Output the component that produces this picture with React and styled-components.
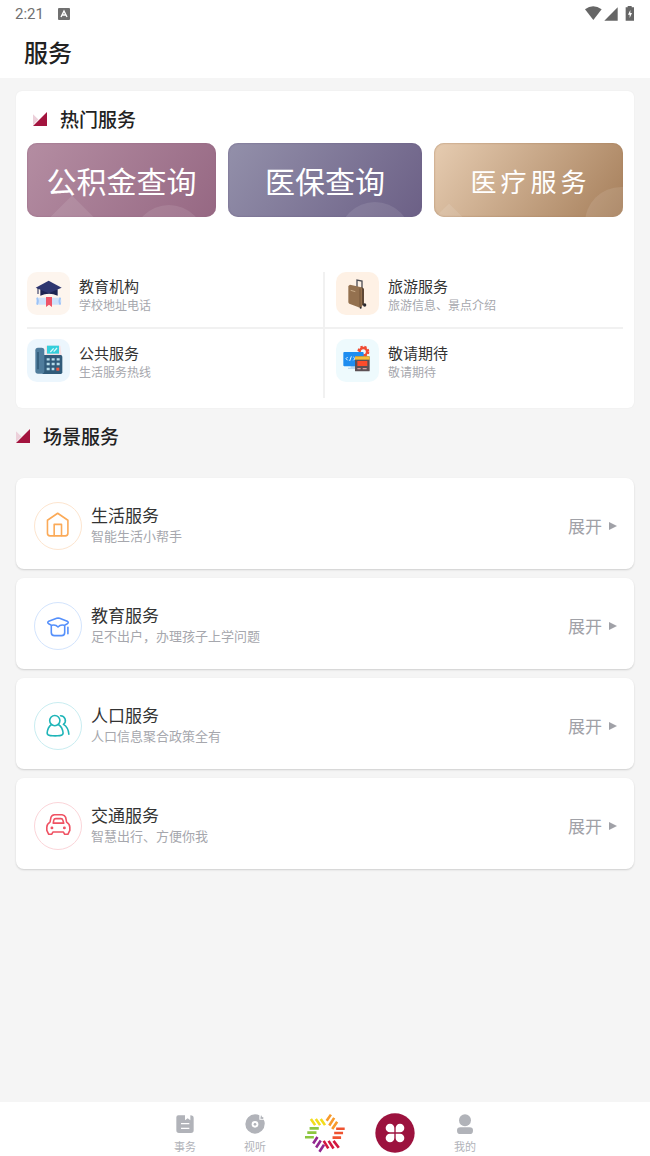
import React from 'react';
import styled, { createGlobalStyle } from 'styled-components';

const GlobalStyle = createGlobalStyle`
  * {
    box-sizing: border-box;
  }

  body {
    margin: 0;
    background: #f5f5f5;
    color: #2b2b2b;
    font-family: 'Noto Sans CJK SC', sans-serif;
  }

  h1, h2, h3, p {
    margin: 0;
  }

  button {
    border: 0;
    padding: 0;
    background: none;
    font-family: inherit;
    cursor: pointer;
  }

  svg {
    display: block;
    flex: none;
  }
`;

const Page = styled.div`
  display: flex;
  flex-direction: column;
  min-height: 100vh;
`;

const StatusBar = styled.div`
  display: flex;
  align-items: center;
  gap: 14px;
  height: 27px;
  padding: 0 15px;
  background: #fff;
  color: #707070;
  font-family: Roboto, sans-serif;
  font-size: 15px;
`;

const StatusIcons = styled.div`
  display: flex;
  align-items: center;
  margin-left: auto;
`;

const Header = styled.header`
  padding: 7px 24px 8px;
  background: #fff;
`;

const PageTitle = styled.h1`
  color: #222;
  font-weight: 500;
  font-size: 24px;
  line-height: 36px;
`;

const Main = styled.main`
  flex: 1;
  padding: 13px 16px 32px;
`;

const HotCard = styled.section`
  padding: 12px 11px 10px;
  border-radius: 6px;
  background: #fff;
  box-shadow: 0 0 2px rgba(0, 0, 0, 0.06);
`;

const SectionHead = styled.div`
  display: flex;
  align-items: center;
  gap: 13px;
  height: 32px;
  margin: ${({ $inCard }) => ($inCard ? '0 0 8px 6px' : '12px 0 26px')};
`;

const SectionTitle = styled.h2`
  color: #222;
  font-weight: 500;
  font-size: 19px;
  line-height: 32px;
`;

const Banners = styled.div`
  display: grid;
  grid-template-columns: 189fr 194fr 189fr;
  gap: 12px;
`;

const Banner = styled.button`
  position: relative;
  height: 74px;
  overflow: hidden;
  border-radius: 10px;
  background: ${({ $from, $to }) => `linear-gradient(125deg, ${$from}, ${$to})`};
  box-shadow: inset 0 0 2px ${({ $to }) => $to};
  color: #fff;
  font-size: ${({ $spaced }) => ($spaced ? 26 : 30)}px;
  letter-spacing: ${({ $spaced }) => ($spaced ? '4px' : 'normal')};
  padding-left: ${({ $spaced }) => ($spaced ? 4 : 0)}px;
`;

const Diamond = styled.i`
  position: absolute;
  top: ${({ $top }) => $top}px;
  left: ${({ $left }) => $left}%;
  width: 56px;
  height: 56px;
  background: rgba(255, 255, 255, 0.1);
  transform: rotate(45deg);
`;

const Bubble = styled.i`
  position: absolute;
  top: ${({ $top }) => $top}px;
  left: ${({ $left }) => $left}%;
  width: 72px;
  height: 72px;
  border-radius: 50%;
  background: rgba(255, 255, 255, 0.1);
`;

const BannerText = styled.span`
  position: relative;
`;

const HotGrid = styled.div`
  display: grid;
  grid-template-columns: 1fr 1fr;
  margin-top: 55px;
`;

const HotItem = styled.div`
  display: flex;
  gap: 9px;
  padding-bottom: ${({ $last }) => ($last ? 16 : 12)}px;
  padding-top: ${({ $last }) => ($last ? 10 : 0)}px;
  padding-left: ${({ $right }) => ($right ? 11 : 0)}px;
  border-right: ${({ $right }) => ($right ? 0 : 2)}px solid #f1f1f1;
  border-bottom: ${({ $last }) => ($last ? 0 : 2)}px solid #f1f1f1;
`;

const Tile = styled.svg`
  width: 43px;
  height: 43px;
  border-radius: 10px;
  background: ${({ $bg }) => $bg};
`;

const HotText = styled.div`
  padding-top: 4px;
`;

const HotName = styled.h3`
  color: #333;
  font-weight: 400;
  font-size: 15px;
  line-height: 20px;
`;

const HotDesc = styled.p`
  color: #a6a7ad;
  font-size: 12px;
  line-height: 18px;
`;

const SceneList = styled.div`
  display: grid;
  gap: 9px;
`;

const SceneCard = styled.section`
  display: flex;
  align-items: center;
  gap: 9px;
  padding: 24px 17px 19px 18px;
  border-radius: 8px;
  background: #fff;
  box-shadow: 0 1px 2px rgba(0, 0, 0, 0.16);
`;

const SceneIcon = styled.svg`
  width: 48px;
  height: 48px;
  border: 1px solid ${({ $ring }) => $ring};
  border-radius: 50%;
  color: ${({ $color }) => $color};
  fill: none;
  stroke: currentColor;
  stroke-width: 5;
  stroke-linejoin: round;
  stroke-linecap: round;
`;

const SceneText = styled.div`
  flex: 1;
  padding-bottom: 4px;
`;

const SceneName = styled.h3`
  color: #333;
  font-weight: 400;
  font-size: 17px;
  line-height: 24px;
`;

const SceneDesc = styled.p`
  color: #a6a7ad;
  font-size: 13px;
  line-height: 18px;
`;

const Expand = styled.button`
  display: flex;
  align-items: center;
  gap: 7px;
  color: #a0a1a7;
  font-size: 17px;
  line-height: 24px;
`;

const TabBar = styled.nav`
  position: sticky;
  bottom: 0;
  display: flex;
  justify-content: center;
  height: 54px;
  background: #fff;
`;

const TabItem = styled.button`
  display: flex;
  flex-direction: column;
  align-items: center;
  justify-content: center;
  gap: 4px;
  width: 70px;
  padding-top: ${({ $plain }) => ($plain ? 10 : 7)}px;
  color: #b1b3b9;
  font-size: 11px;
  line-height: 16px;
`;

const Marker = () => (
  <svg width="14" height="14" viewBox="0 0 13 13" aria-hidden="true">
    <path d="M0 2L5 7L0 12Z" fill="#ecd0da" />
    <path d="M13 0V13H0Z" fill="#a3143e" />
  </svg>
);

const hotServices = [
  {
    name: '教育机构',
    desc: '学校地址电话',
    bg: '#fdf5ee',
    icon: (
      <>
        <path d="M30 77H100Q106 87 100 98H30Q24 87 30 77Z" fill="#cfe2fb" />
        <path d="M30 77Q36 87 30 98M100 77Q94 87 100 98" stroke="#9dc3f6" strokeWidth="5" fill="none" />
        <path d="M57 75H75V105L66 98L57 105Z" fill="#ee5468" />
        <path d="M40 52H92V71Q66 60 40 71Z" fill="#1d2452" />
        <path d="M65 26L104 47L65 64L26 47Z" fill="#2e3670" />
        <path d="M33 48V66" stroke="#1d2452" strokeWidth="3" />
      </>
    ),
  },
  {
    name: '旅游服务',
    desc: '旅游信息、景点介绍',
    bg: '#fef1e5',
    icon: (
      <>
        <path d="M63 46V24L78 27V50" stroke="#4c4d54" strokeWidth="4" fill="none" />
        <path d="M68 106L84 98V50L76 44Z" fill="#5f4835" />
        <path d="M37 42L42 38L76 46L78 50V104L72 107L40 95Q37 94 37 90Z" fill="#94714f" />
        <path d="M44 55L58 59" stroke="#c9ab87" strokeWidth="3" />
        <path d="M72 49V104" stroke="#74573b" strokeWidth="3" />
        <circle cx="86" cy="99" r="5" fill="#2c2b30" />
        <circle cx="74" cy="107" r="3" fill="#2c2b30" />
      </>
    ),
  },
  {
    name: '公共服务',
    desc: '生活服务热线',
    bg: '#ecf6fd',
    icon: (
      <>
        <path d="M56 20H100L104 50H56Z" fill="#f7dfe2" />
        <rect x="60" y="20" width="36" height="24" fill="#35cfdb" />
        <path d="M70 39L80 28M80 38L90 27" stroke="#d5fafc" strokeWidth="4" />
        <rect x="44" y="48" width="62" height="57" rx="5" fill="#315b7a" />
        <rect x="25" y="26" width="27" height="78" rx="8" fill="#4f7c9c" />
        <path d="M33 39V91" stroke="#315b7a" strokeWidth="5" />
        <path d="M59 61H99M59 75H99M59 90H82" stroke="#b7dcea" strokeWidth="7" strokeDasharray="9 6" />
        <rect x="88" y="86" width="9" height="9" fill="#f15742" />
      </>
    ),
  },
  {
    name: '敬请期待',
    desc: '敬请期待',
    bg: '#eefafd',
    icon: (
      <>
        <circle cx="82" cy="38" r="15" stroke="#f04c34" strokeWidth="6" strokeDasharray="7 5" fill="none" />
        <circle cx="82" cy="38" r="11" stroke="#f04c34" strokeWidth="7" fill="none" />
        <path d="M44 78H60V90H36V86H44Z" fill="#bcd9ee" />
        <rect x="22" y="39" width="61" height="43" rx="3" fill="#1e8df0" />
        <path d="M35 54L30 59L35 64M52 54L57 59L52 64M46 52L41 66" stroke="#e8f5ff" strokeWidth="3" fill="none" />
        <rect x="57" y="52" width="44" height="45" rx="2" fill="#5c5054" />
        <rect x="57" y="52" width="44" height="10" fill="#f6bd36" />
        <rect x="64" y="66" width="30" height="15" fill="#fc4c2c" />
        <path d="M64 89H74M80 89H92" stroke="#d5a0a0" strokeWidth="4" />
      </>
    ),
  },
];

const sceneServices = [
  {
    name: '生活服务',
    desc: '智能生活小帮手',
    color: '#fbaa58',
    ring: '#fde5cf',
    icon: (
      <>
        <path d="M39 54L71 32L103 54V95Q103 103 95 103H47Q39 103 39 95Z" />
        <path d="M60 102V67H83V102" />
      </>
    ),
  },
  {
    name: '教育服务',
    desc: '足不出户，办理孩子上学问题',
    color: '#5590fb',
    ring: '#d3e4fd',
    icon: (
      <>
        <path d="M43 57L68 48Q72 47 77 48L101 57Q107 61 101 65L92 70Q80 66 72 75Q64 66 52 70L43 65Q37 61 43 57Z" />
        <path d="M51 71V92Q51 102 61 102H83Q93 102 93 92V71M103 76V96" />
      </>
    ),
  },
  {
    name: '人口服务',
    desc: '人口信息聚合政策全有',
    color: '#1fb5b8',
    ring: '#c9edf1',
    icon: (
      <>
        <circle cx="62" cy="55" r="16" />
        <path d="M51 68C43 73 39 84 38 94Q38 101 48 102Q63 104 78 102Q88 101 88 94C87 84 82 73 74 68" />
        <path d="M80 40A15 15 0 0 1 89 67C99 73 105 84 106 98" />
      </>
    ),
  },
  {
    name: '交通服务',
    desc: '智慧出行、方便你我',
    color: '#ef5263',
    ring: '#fbd5d9',
    icon: (
      <>
        <path d="M50 45Q52 38 61 37H85Q93 38 96 45L99 60Q109 66 109 76V86L103 98H93L89 91H56L52 98H43L37 86V76Q37 66 47 60Z" />
        <path d="M57 63L59 53Q60 49 65 49H81Q86 49 87 53L90 63Z" />
        <circle cx="53" cy="78" r="2" />
        <circle cx="92" cy="78" r="2" />
      </>
    ),
  },
];

const rays = [
  ['#f2dc1c', 'M453 70L466 89M468 70L481 89M483 70L496 89'],
  ['#f79a2c', 'M501 76L514 57M509 90L524 67M518 101L533 79'],
  ['#ef5330', 'M530 100H556M524 113H551M519 127H545'],
  ['#d3173f', 'M492 137L506 160M507 137L522 160M522 137L538 158'],
  ['#92278f', 'M460 145L473 125M469 157L483 136M479 170L493 149'],
  ['#8cc63f', 'M449 99H477M442 112H470M435 126H462'],
];

const Logo = () => (
  <svg width="42" height="42" viewBox="432 50 128 126" strokeWidth="8" fill="none">
    {rays.map(([color, d]) => (
      <path key={color} d={d} stroke={color} />
    ))}
  </svg>
);

const App = () => (
  <Page>
    <GlobalStyle />
    <StatusBar>
      <span>2:21</span>
      <svg width="12" height="12" viewBox="0 0 12 12">
        <rect width="12" height="12" rx="1" fill="#707070" />
        <path d="M3 9L6 3L9 9M4 7H8" stroke="#fff" strokeWidth="1.4" fill="none" />
      </svg>
      <StatusIcons>
        <svg width="50" height="16" viewBox="0 0 150 48" fill="#666">
          <path d="M0 10Q24 -8 50 10L25 42Z" />
          <path d="M98 4V44H58Z" />
          <path d="M128 4V0H140V4H147V44H122V4ZM136 12L129 26H134V36L141 21H136Z" fillRule="evenodd" />
        </svg>
      </StatusIcons>
    </StatusBar>

    <Header>
      <PageTitle>服务</PageTitle>
    </Header>

    <Main>
      <HotCard>
        <SectionHead $inCard>
          <Marker />
          <SectionTitle>热门服务</SectionTitle>
        </SectionHead>

        <Banners>
          <Banner $from="#b48da2" $to="#966883">
            <Diamond $top={64} $left={9} />
            <Bubble $top={62} $left={56} />
            <BannerText>公积金查询</BannerText>
          </Banner>
          <Banner $from="#9390aa" $to="#6c6086">
            <Bubble $top={59} $left={57} />
            <BannerText>医保查询</BannerText>
          </Banner>
          <Banner $from="#e6ccb1" $to="#a67f5b" $spaced>
            <Diamond $top={72} $left={-7} />
            <Bubble $top={44} $left={80} />
            <BannerText>医疗服务</BannerText>
          </Banner>
        </Banners>

        <HotGrid>
          {hotServices.map(({ name, desc, bg, icon }, index) => (
            <HotItem key={name} $right={index % 2 === 1} $last={index > 1}>
              <Tile viewBox="0 0 129 129" $bg={bg} aria-hidden="true">
                {icon}
              </Tile>
              <HotText>
                <HotName>{name}</HotName>
                <HotDesc>{desc}</HotDesc>
              </HotText>
            </HotItem>
          ))}
        </HotGrid>
      </HotCard>

      <SectionHead>
        <Marker />
        <SectionTitle>场景服务</SectionTitle>
      </SectionHead>

      <SceneList>
        {sceneServices.map(({ name, desc, color, ring, icon }) => (
          <SceneCard key={name}>
            <SceneIcon viewBox="0 0 144 144" $color={color} $ring={ring} aria-hidden="true">
              {icon}
            </SceneIcon>
            <SceneText>
              <SceneName>{name}</SceneName>
              <SceneDesc>{desc}</SceneDesc>
            </SceneText>
            <Expand>
              展开
              <svg width="8" height="8" viewBox="0 0 8 8" fill="currentColor">
                <path d="M0 0L8 4L0 8Z" />
              </svg>
            </Expand>
          </SceneCard>
        ))}
      </SceneList>
    </Main>

    <TabBar>
      <TabItem $plain>
        <svg width="20" height="20" viewBox="0 0 60 60">
          <path d="M10 4H30V19L38 13L46 19V4Q56 4 56 12V49Q56 57 48 57H12Q4 57 4 49V10Q4 4 10 4Z" fill="#b1b3b9" />
          <path d="M18 29H43M18 43H43" stroke="#fff" strokeWidth="4" />
        </svg>
        事务
      </TabItem>
      <TabItem $plain>
        <svg width="20" height="20" viewBox="0 0 60 60">
          <path d="M30 1Q38 1 43 4V17H56Q60 24 59 30A29 29 0 1 1 30 1Z" fill="#b1b3b9" />
          <path d="M48 3Q50 9 56 11L54 15L46 14Z" fill="#b1b3b9" />
          <circle cx="30" cy="31" r="10" fill="#fff" />
          <circle cx="30" cy="31" r="4" fill="#b1b3b9" />
        </svg>
        视听
      </TabItem>
      <TabItem aria-label="首页">
        <Logo />
      </TabItem>
      <TabItem aria-label="服务">
        <svg width="40" height="40" viewBox="0 0 120 120">
          <circle cx="60" cy="60" r="59" fill="#9c123e" />
          <g fill="#fff">
            <path d="M58 58H45A13 13 0 1 1 58 45Z" />
            <path d="M62 58V45A13 13 0 1 1 75 58Z" />
            <path d="M58 62V75A13 13 0 1 1 45 62Z" />
            <path d="M62 62H75A13 13 0 1 1 62 75Z" />
          </g>
        </svg>
      </TabItem>
      <TabItem $plain>
        <svg width="20" height="20" viewBox="0 0 60 60" fill="#b1b3b9">
          <circle cx="30" cy="19" r="18" />
          <rect x="6" y="40" width="48" height="20" rx="10" />
        </svg>
        我的
      </TabItem>
    </TabBar>
  </Page>
);

export default App;
